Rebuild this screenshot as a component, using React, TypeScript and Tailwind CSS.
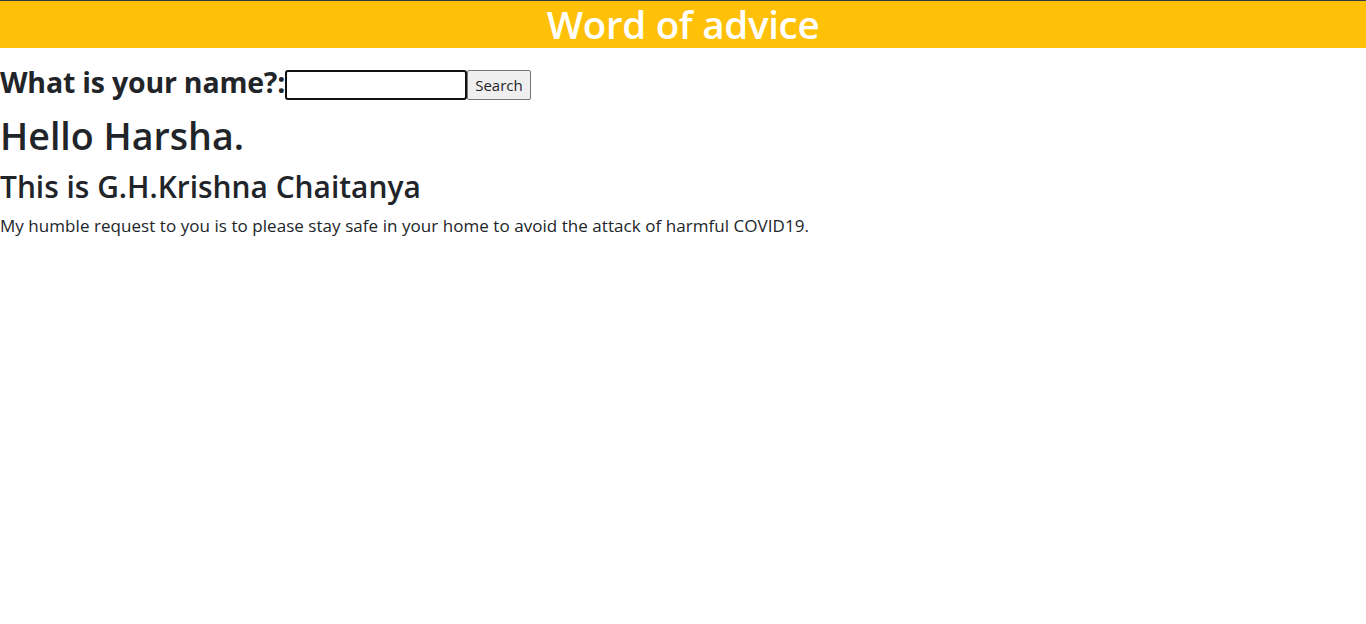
export default function App() {
  const font = { fontFamily: '"Open Sans", "Noto Sans", sans-serif' };
  return (
    <div className="min-h-[624px] bg-white text-[#212529]" style={font}>
      <div className="h-[48px] border-t border-[#343a40] bg-[#ffc107] flex justify-center items-center">
        <h1 className="text-[38.5px] leading-[47px] font-semibold text-white tracking-[-0.3px]">Word of advice</h1>
      </div>
      <div className="flex items-end mt-[22px] h-[30px]">
        <label className="text-[28.5px] font-bold leading-[30px] tracking-[-0.2px] relative top-[-3px]">What is your name?:</label>
        <input className="w-[182px] h-[30px] border-2 border-[#101010] rounded-[3px] outline-none px-[2px]" />
        <button className="h-[30px] px-[7px] bg-[#efefef] border border-[#767676] rounded-[2px] text-[15px] leading-[20px]">Search</button>
      </div>
      <h1 className="text-[37.6px] leading-[48px] font-semibold mt-[12px]">Hello Harsha.</h1>
      <h2 className="text-[29.9px] leading-[38px] font-semibold mt-[8px]">This is G.H.Krishna Chaitanya</h2>
      <p className="text-[17px] leading-[24px] mt-[8px] tracking-[0.05px]">My humble request to you is to please stay safe in your home to avoid the attack of harmful COVID19.</p>
    </div>
  );
}
